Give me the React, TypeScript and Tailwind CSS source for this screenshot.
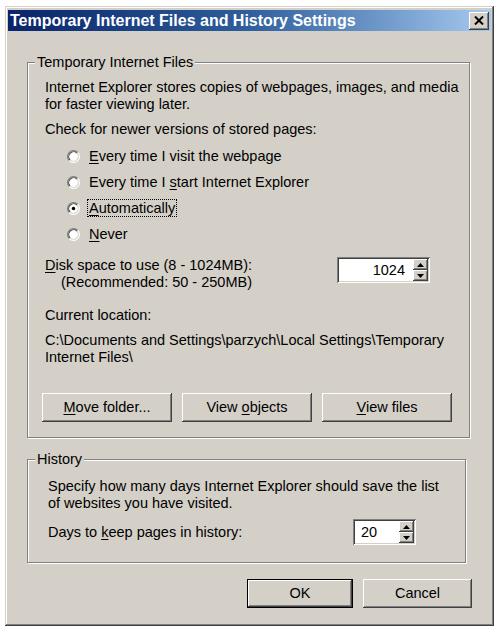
import type { ReactNode } from "react";

const FONT = "font-['Liberation_Sans',Tahoma,Arial,sans-serif]";

const raised =
  "bg-[#d4d0c8] shadow-[inset_-1px_-1px_0_#404040,inset_1px_1px_0_#ffffff,inset_-2px_-2px_0_#808080,inset_2px_2px_0_#d4d0c8]";

const sunken =
  "bg-white shadow-[inset_1px_1px_0_#808080,inset_-1px_-1px_0_#ffffff,inset_2px_2px_0_#404040,inset_-2px_-2px_0_#d4d0c8]";

const groupBox =
  "min-w-0 border border-[#808080] shadow-[inset_1px_1px_0_#ffffff,1px_1px_0_#ffffff]";

const Key = ({ children }: { children: ReactNode }) => (
  <span className="underline underline-offset-2">{children}</span>
);

const Radio = ({ checked }: { checked?: boolean }) => (
  <svg width="13" height="13" viewBox="0 0 12 12" className="shrink-0">
    <circle cx="6" cy="6" r="5" fill="#ffffff" />
    <path d="M2.11 9.89A5.5 5.5 0 0 1 9.89 2.11" fill="none" stroke="#808080" />
    <path d="M2.82 9.18A4.5 4.5 0 0 1 9.18 2.82" fill="none" stroke="#404040" />
    <path d="M9.89 2.11A5.5 5.5 0 0 1 2.11 9.89" fill="none" stroke="#ffffff" />
    <path d="M9.18 2.82A4.5 4.5 0 0 1 2.82 9.18" fill="none" stroke="#d4d0c8" />
    {checked && <circle cx="6" cy="6" r="1.6" fill="#000000" />}
  </svg>
);

const SpinArrows = () => (
  <div className="flex flex-col w-[17px] h-full p-[2px] pl-0">
    <div className={`${raised} flex-1 flex items-center justify-center`}>
      <svg width="7" height="4" viewBox="0 0 7 4">
        <path d="M3.5 0L7 4H0z" fill="#000" />
      </svg>
    </div>
    <div className={`${raised} flex-1 flex items-center justify-center`}>
      <svg width="7" height="4" viewBox="0 0 7 4">
        <path d="M0 0h7L3.5 4z" fill="#000" />
      </svg>
    </div>
  </div>
);

const SpinBox = ({ value, width, right }: { value: string; width: string; right?: boolean }) => (
  <div className={`${sunken} ${width} h-[26px] flex items-stretch shrink-0`}>
    <div className={`flex-1 flex items-center px-[8px] ${right ? "justify-end" : "justify-start"}`}>
      {value}
    </div>
    <SpinArrows />
  </div>
);

const Button = ({ children, width, isDefault }: { children: ReactNode; width: string; isDefault?: boolean }) => (
  <button
    className={`${width} h-[29px] flex items-center justify-center ${
      isDefault
        ? "bg-[#d4d0c8] shadow-[inset_0_0_0_1px_#000000,inset_-2px_-2px_0_#404040,inset_2px_2px_0_#ffffff,inset_-3px_-3px_0_#808080]"
        : raised
    }`}
  >
    <span>{children}</span>
  </button>
);

const RadioRow = ({ children, checked }: { children: ReactNode; checked?: boolean }) => (
  <div className="h-[26px] flex items-center pl-[22px] gap-[9px]">
    <Radio checked={checked} />
    <span className={checked ? "outline outline-1 outline-dotted outline-black px-[1px] -mx-[1px] leading-[16px]" : ""}>
      {children}
    </span>
  </div>
);

export default function App() {
  return (
    <div className={`w-[500px] h-[629px] bg-white pt-[6px] pl-[5px] ${FONT} text-[14.5px] leading-[17px] text-black whitespace-nowrap`}>
      <div className="w-[489px] h-[620px] bg-[#d4d0c8] p-[3px] shadow-[inset_-1px_-1px_0_#404040,inset_1px_1px_0_#d4d0c8,inset_-2px_-2px_0_#808080,inset_2px_2px_0_#ffffff] flex flex-col">
        <div className="h-[21px] mt-[1px] flex items-center justify-between pl-[2px] pr-[2px] bg-gradient-to-r from-[#0a246a] via-[#2f5f9c] to-[#a6caf0]">
          <span className="text-white font-bold text-[16px]">Temporary Internet Files and History Settings</span>
          <div className={`${raised} w-[20px] h-[18px] flex items-center justify-center`}>
            <svg width="10" height="9" viewBox="0 0 10 9">
              <path d="M1 0.5L9 8.5M9 0.5L1 8.5" stroke="#000" strokeWidth="2" />
            </svg>
          </div>
        </div>

        <div className="flex-1 flex flex-col pt-[23px] pl-[19px] pr-[21px]">
          <fieldset className={`${groupBox} pl-[17px] pr-[17px] pt-[8px] pb-[15px]`}>
            <legend className="-ml-[10px] px-[2px] bg-[#d4d0c8]">Temporary Internet Files</legend>
            <p>
              Internet Explorer stores copies of webpages, images, and media
              <br />
              for faster viewing later.
            </p>
            <p className="mt-[8px]">Check for newer versions of stored pages:</p>
            <div className="mt-[5px] flex flex-col">
              <RadioRow>
                <Key>E</Key>very time I visit the webpage
              </RadioRow>
              <RadioRow>
                Every time I <Key>s</Key>tart Internet Explorer
              </RadioRow>
              <RadioRow checked>
                <Key>A</Key>utomatically
              </RadioRow>
              <RadioRow>
                <Key>N</Key>ever
              </RadioRow>
            </div>
            <div className="mt-[10px] flex items-start justify-between pr-[22px]">
              <div>
                <p>
                  <Key>D</Key>isk space to use (8 - 1024MB):
                </p>
                <p className="pl-[16px]">(Recommended: 50 - 250MB)</p>
              </div>
              <SpinBox value="1024" width="w-[93px]" right />
            </div>
            <p className="mt-[16px]">Current location:</p>
            <p className="mt-[8px]">
              C:\Documents and Settings\parzych\Local Settings\Temporary
              <br />
              Internet Files\
            </p>
            <div className="mt-[27px] -ml-[3px] flex justify-between">
              <Button width="w-[130px]">
                <Key>M</Key>ove folder...
              </Button>
              <Button width="w-[130px]">
                View <Key>o</Key>bjects
              </Button>
              <Button width="w-[130px]">
                <Key>V</Key>iew files
              </Button>
            </div>
          </fieldset>

          <fieldset className={`${groupBox} mt-[13px] mr-[4px] pl-[20px] pr-[20px] pt-[10px] pb-[17px]`}>
            <legend className="-ml-[13px] px-[2px] bg-[#d4d0c8]">History</legend>
            <p>
              Specify how many days Internet Explorer should save the list
              <br />
              of websites you have visited.
            </p>
            <div className="mt-[7px] flex items-center">
              <span className="w-[305px]">
                Days to <Key>k</Key>eep pages in history:
              </span>
              <SpinBox value="20" width="w-[63px]" />
            </div>
          </fieldset>

          <div className="mt-[16px] -mr-[2px] flex justify-end gap-[10px]">
            <Button width="w-[106px]" isDefault>
              OK
            </Button>
            <Button width="w-[109px]">Cancel</Button>
          </div>
        </div>
      </div>
    </div>
  );
}
